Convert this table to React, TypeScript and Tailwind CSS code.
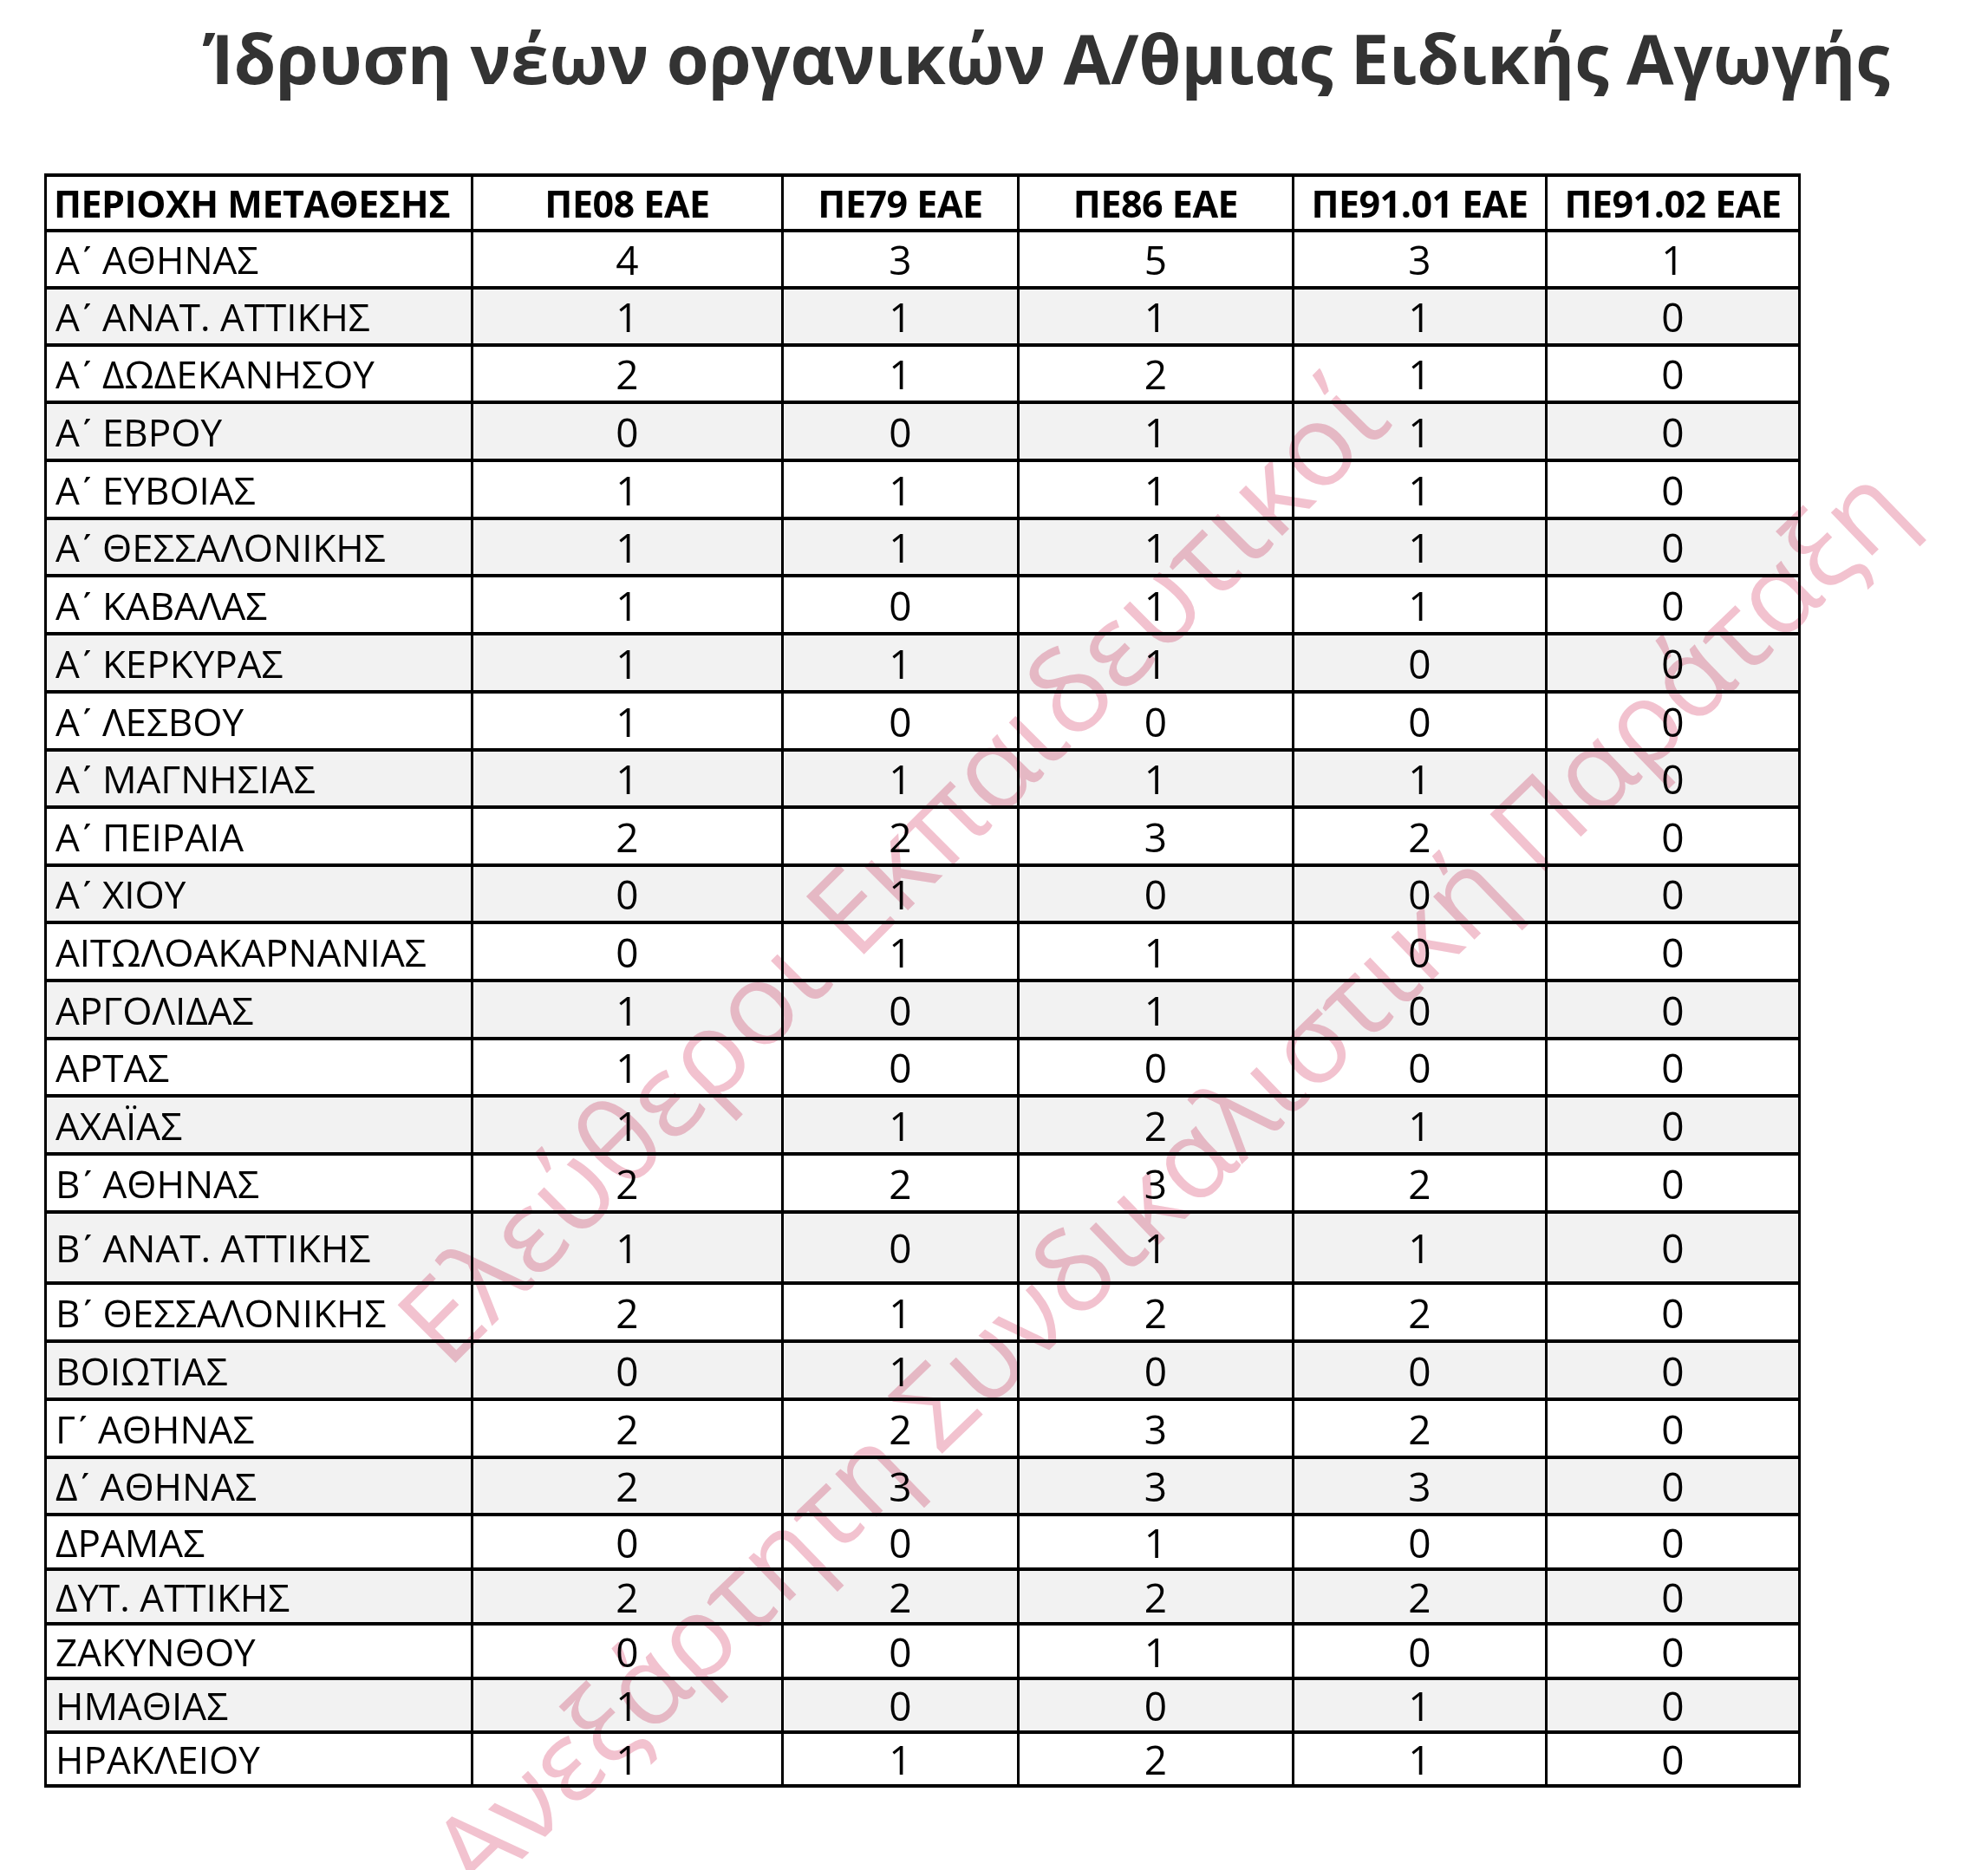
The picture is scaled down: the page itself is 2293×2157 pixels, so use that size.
const headers = ["ΠΕΡΙΟΧΗ ΜΕΤΑΘΕΣΗΣ", "ΠΕ08 ΕΑΕ", "ΠΕ79 ΕΑΕ", "ΠΕ86 ΕΑΕ", "ΠΕ91.01 ΕΑΕ", "ΠΕ91.02 ΕΑΕ"];

type Row = { name: string; vals: number[]; h: string };

// greek numeral sign after the letter
const K = "\u0374";

const rows: Row[] = [
  { name: `Α${K} ΑΘΗΝΑΣ`, vals: [4, 3, 5, 3, 1], h: "h-[66px]" },
  { name: `Α${K} ΑΝΑΤ. ΑΤΤΙΚΗΣ`, vals: [1, 1, 1, 1, 0], h: "h-[66px]" },
  { name: `Α${K} ΔΩΔΕΚΑΝΗΣΟΥ`, vals: [2, 1, 2, 1, 0], h: "h-[66px]" },
  { name: `Α${K} ΕΒΡΟΥ`, vals: [0, 0, 1, 1, 0], h: "h-[67px]" },
  { name: `Α${K} ΕΥΒΟΙΑΣ`, vals: [1, 1, 1, 1, 0], h: "h-[67px]" },
  { name: `Α${K} ΘΕΣΣΑΛΟΝΙΚΗΣ`, vals: [1, 1, 1, 1, 0], h: "h-[66px]" },
  { name: `Α${K} ΚΑΒΑΛΑΣ`, vals: [1, 0, 1, 1, 0], h: "h-[67px]" },
  { name: `Α${K} ΚΕΡΚΥΡΑΣ`, vals: [1, 1, 1, 0, 0], h: "h-[67px]" },
  { name: `Α${K} ΛΕΣΒΟΥ`, vals: [1, 0, 0, 0, 0], h: "h-[67px]" },
  { name: `Α${K} ΜΑΓΝΗΣΙΑΣ`, vals: [1, 1, 1, 1, 0], h: "h-[66px]" },
  { name: `Α${K} ΠΕΙΡΑΙΑ`, vals: [2, 2, 3, 2, 0], h: "h-[67px]" },
  { name: `Α${K} ΧΙΟΥ`, vals: [0, 1, 0, 0, 0], h: "h-[66px]" },
  { name: "ΑΙΤΩΛΟΑΚΑΡΝΑΝΙΑΣ", vals: [0, 1, 1, 0, 0], h: "h-[67px]" },
  { name: "ΑΡΓΟΛΙΔΑΣ", vals: [1, 0, 1, 0, 0], h: "h-[67px]" },
  { name: "ΑΡΤΑΣ", vals: [1, 0, 0, 0, 0], h: "h-[66px]" },
  { name: "ΑΧΑΪΑΣ", vals: [1, 1, 2, 1, 0], h: "h-[67px]" },
  { name: `Β${K} ΑΘΗΝΑΣ`, vals: [2, 2, 3, 2, 0], h: "h-[67px]" },
  { name: `Β${K} ΑΝΑΤ. ΑΤΤΙΚΗΣ`, vals: [1, 0, 1, 1, 0], h: "h-[82px]" },
  { name: `Β${K} ΘΕΣΣΑΛΟΝΙΚΗΣ`, vals: [2, 1, 2, 2, 0], h: "h-[67px]" },
  { name: "ΒΟΙΩΤΙΑΣ", vals: [0, 1, 0, 0, 0], h: "h-[67px]" },
  { name: `Γ${K} ΑΘΗΝΑΣ`, vals: [2, 2, 3, 2, 0], h: "h-[67px]" },
  { name: `Δ${K} ΑΘΗΝΑΣ`, vals: [2, 3, 3, 3, 0], h: "h-[66px]" },
  { name: "ΔΡΑΜΑΣ", vals: [0, 0, 1, 0, 0], h: "h-[63px]" },
  { name: "ΔΥΤ. ΑΤΤΙΚΗΣ", vals: [2, 2, 2, 2, 0], h: "h-[63px]" },
  { name: "ΖΑΚΥΝΘΟΥ", vals: [0, 0, 1, 0, 0], h: "h-[63px]" },
  { name: "ΗΜΑΘΙΑΣ", vals: [1, 0, 0, 1, 0], h: "h-[62px]" },
  { name: "ΗΡΑΚΛΕΙΟΥ", vals: [1, 1, 2, 1, 0], h: "h-[62px]" },
];

const colWidths = ["w-[492px]", "w-[358px]", "w-[272px]", "w-[317px]", "w-[292px]", "w-[292px]"];

const cell = "border-x-[3px] border-y-[4px] border-black p-0 align-middle leading-none";

export default function App() {
  return (
    <div className="relative w-[2293px] h-[2157px] overflow-hidden bg-white">
      <h1 className="pl-[234px] pt-[28px] text-[79px] leading-[78px] font-bold text-[#333333] whitespace-nowrap font-['Open_Sans',sans-serif]">
        Ίδρυση νέων οργανικών Α/θμιας Ειδικής Αγωγής
      </h1>

      <table className="ml-[51px] mt-[94px] w-[2023px] table-fixed border-collapse text-black font-['Open_Sans',sans-serif]">
        <colgroup>
          {colWidths.map((w, i) => (
            <col key={i} className={w} />
          ))}
        </colgroup>
        <thead>
          <tr className="h-[64px] bg-white">
            {headers.map((h, i) => (
              <th
                key={h}
                className={`${cell} text-[43px] font-bold tracking-[-0.5px] ${i === 0 ? "text-left pl-[8px]" : "text-center"}`}
              >
                {h}
              </th>
            ))}
          </tr>
        </thead>
        <tbody>
          {rows.map((r, idx) => (
            <tr key={r.name} className={`${r.h} ${idx % 2 === 1 ? "bg-[#f2f2f2]" : "bg-white"}`}>
              <td className={`${cell} pl-[10px] text-left text-[44px]`}>{r.name}</td>
              {r.vals.map((v, j) => (
                <td key={j} className={`${cell} text-center text-[46px]`}>
                  {v}
                </td>
              ))}
            </tr>
          ))}
        </tbody>
      </table>

      {/* watermark */}
      <div className="pointer-events-none absolute left-[1026px] top-[999px] -translate-x-1/2 -translate-y-1/2 -rotate-45 whitespace-nowrap text-[132px] leading-none text-[#f2c2cf] mix-blend-multiply font-['Open_Sans',sans-serif]">
        Ελεύθεροι Εκπαιδευτικοί
      </div>
      <div className="pointer-events-none absolute left-[1346px] top-[1358px] -translate-x-1/2 -translate-y-1/2 -rotate-[44deg] whitespace-nowrap text-[128px] leading-none text-[#f2c2cf] mix-blend-multiply font-['Open_Sans',sans-serif]">
        Ανεξάρτητη Συνδικαλιστική Παράταξη
      </div>
    </div>
  );
}
